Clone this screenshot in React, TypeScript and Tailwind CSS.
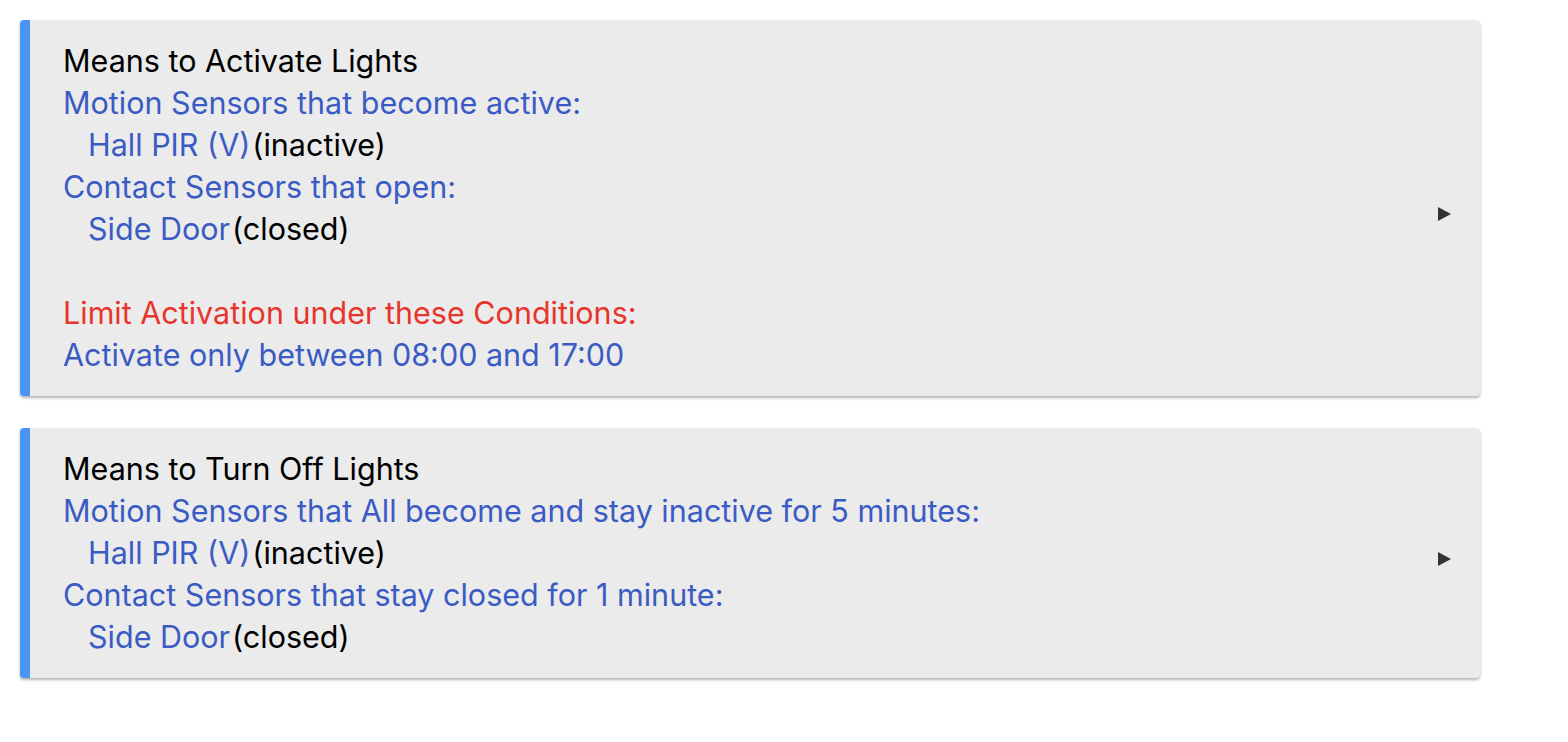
const Device = ({ name, state }: { name: string; state: string }) => (
  <div className="pl-[25px]">
    <span className="text-[#3b5bc4]">{name}</span>
    <span className="ml-[2px] text-black">({state})</span>
  </div>
);

const Card = ({ children }: { children: React.ReactNode }) => (
  <div className="flex items-center rounded-[4px] border-l-[10px] border-[#4a94f4] bg-[#ebebeb] pl-[33px] pr-[28px] py-[20px] shadow-[0_2px_3px_rgba(0,0,0,0.3)]">
    <div className="flex-1">{children}</div>
    <svg className="mt-[12px]" width="15" height="16" viewBox="0 0 15 16">
      <polygon points="1,1 14,8 1,15" fill="#333" />
    </svg>
  </div>
);

export default function App() {
  return (
    <div className="bg-white min-h-screen p-5 font-['Inter',sans-serif] text-[30.5px] leading-[42px]">
      <div className="flex w-[1460px] flex-col gap-8">
        <Card>
          <div className="text-black">Means to Activate Lights</div>
          <div className="text-[#3b5bc4]">Motion Sensors that become active:</div>
          <Device name="Hall PIR (V)" state="inactive" />
          <div className="text-[#3b5bc4]">Contact Sensors that open:</div>
          <Device name="Side Door" state="closed" />
          <div className="h-[42px]" />
          <div className="text-[#e8352b]">Limit Activation under these Conditions:</div>
          <div className="text-[#3b5bc4]">Activate only between 08:00 and 17:00</div>
        </Card>
        <Card>
          <div className="text-black">Means to Turn Off Lights</div>
          <div className="text-[#3b5bc4]">Motion Sensors that All become and stay inactive for 5 minutes:</div>
          <Device name="Hall PIR (V)" state="inactive" />
          <div className="text-[#3b5bc4]">Contact Sensors that stay closed for 1 minute:</div>
          <Device name="Side Door" state="closed" />
        </Card>
      </div>
    </div>
  );
}
